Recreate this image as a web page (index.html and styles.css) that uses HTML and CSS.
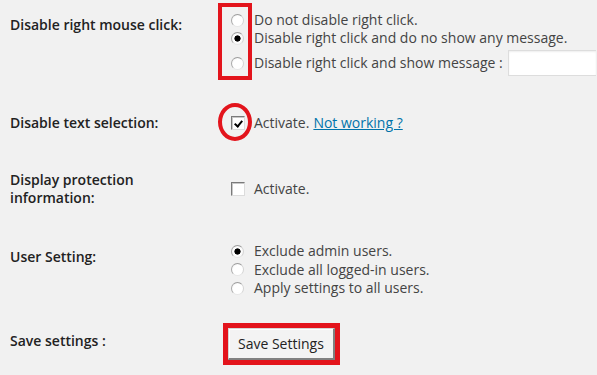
FILE: index.html
```html
<!DOCTYPE html>
<html lang="en">
<head>
    <meta charset="UTF-8">
    <meta name="viewport" content="width=device-width, initial-scale=1.0">
    <title>Copy Protection Settings</title>
    <link rel="stylesheet" href="styles.css">
</head>
<body>
    <form class="settings">
        <!-- right click -->
        <div class="row row-rclick">
            <div class="label">Disable right mouse click:</div>
            <div class="field">
                <div class="choices">
                    <span class="mark-box"></span>
                    <label class="choice"><input type="radio" name="rclick"> Do not disable right click.</label>
                    <label class="choice"><input type="radio" name="rclick" checked> Disable right click and do no show any message.</label>
                    <label class="choice choice-msg"><input type="radio" name="rclick"> Disable right click and show message : <input type="text" class="msg-input"></label>
                </div>
            </div>
        </div>

        <!-- text selection -->
        <div class="row row-select">
            <div class="label">Disable text selection:</div>
            <div class="field">
                <label class="choice choice-check">
                    <span class="mark-circle"></span>
                    <input type="checkbox" checked> Activate. <a href="#" class="help-link">Not working ?</a>
                </label>
            </div>
        </div>

        <!-- protection info -->
        <div class="row row-info">
            <div class="label">Display protection<br>information:</div>
            <div class="field">
                <label class="choice"><input type="checkbox"> Activate.</label>
            </div>
        </div>

        <!-- users -->
        <div class="row row-users">
            <div class="label">User Setting:</div>
            <div class="field">
                <label class="choice"><input type="radio" name="users" checked> Exclude admin users.</label>
                <label class="choice"><input type="radio" name="users"> Exclude all logged-in users.</label>
                <label class="choice"><input type="radio" name="users"> Apply settings to all users.</label>
            </div>
        </div>

        <!-- save -->
        <div class="row row-save">
            <div class="label">Save settings :</div>
            <div class="field">
                <div class="mark-frame">
                    <button type="button" class="btn">Save Settings</button>
                </div>
            </div>
        </div>
    </form>
</body>
</html>
```

FILE: styles.css
```css
* {
    margin: 0;
    padding: 0;
    box-sizing: border-box;
}

body {
    font-family: "Open Sans", "Liberation Sans", sans-serif;
    font-size: 14px;
    color: #444;
    background: #f1f1f1;
    overflow: hidden;
}

.settings {
    padding: 11px 0 0 10px;
}

.row {
    display: flex;
    align-items: flex-start;
}

.label {
    width: 221px;
    flex-shrink: 0;
    font-weight: 600;
    color: #222;
    line-height: 18px;
}

.field {
    display: flex;
    flex-direction: column;
}

.choice {
    display: flex;
    align-items: center;
    line-height: 18px;
    white-space: nowrap;
}

.choices {
    position: relative;
}

/* rows */
.row-rclick .label { padding-top: 5px; }
.choice-msg { margin-top: 3px; }

.row-select { margin-top: 38px; align-items: center; }
.row-info { margin-top: 39px; align-items: center; }

.row-users { margin-top: 35px; }
.row-users .label { padding-top: 6px; }
.row-users .choice { line-height: 18.5px; }

.row-save { margin-top: 25px; }
.row-save .label { padding-top: 9px; }

/* radio + checkbox, old windows look */
input[type="radio"] {
    appearance: none;
    width: 13px;
    height: 13px;
    margin-right: 10px;
    border-radius: 50%;
    border: 1px solid;
    border-color: #9c9c9c #d4d4d4 #e6e6e6 #a8a8a8;
    background: radial-gradient(circle at 60% 60%, #fff 0 55%, #ececec 100%);
    flex-shrink: 0;
}

input[type="radio"]:checked {
    background: radial-gradient(circle, #000 0 2.8px, #fff 3.4px, #f0f0f0 100%);
}

input[type="checkbox"] {
    appearance: none;
    position: relative;
    width: 14px;
    height: 14px;
    margin-right: 9px;
    border: 1px solid;
    border-color: #7a7a7a #dcdcdc #dcdcdc #7a7a7a;
    box-shadow: inset 1px 1px 0 #c8c8c8;
    background: #fff;
    flex-shrink: 0;
}

input[type="checkbox"]:checked::before {
    content: "";
    position: absolute;
    left: 4px;
    top: 2px;
    width: 3px;
    height: 6px;
    border: solid #000;
    border-width: 0 2px 2px 0;
    transform: rotate(40deg);
}

/* field runs off the right edge in the original */
.msg-input {
    margin-left: 5px;
    width: 88px;
    height: 26px;
    border: 1px solid #ddd;
    border-right: 0;
    background: #fff;
    box-shadow: inset 0 1px 2px rgba(0,0,0,0.07);
}

.help-link {
    margin-left: 4px;
    color: #0073aa;
}

.btn {
    font-family: inherit;
    font-size: 14px;
    color: #222;
    height: 32px;
    padding: 0 9px;
    background: #f3f3f3;
    border: 1px solid;
    border-color: #d6d6d6 #808080 #808080 #d6d6d6;
    border-width: 1px 2px 2px 1px;
    box-shadow: inset 1px 1px 0 #fff;
}

/* red highlight marks */
.mark-box {
    position: absolute;
    left: -13px;
    top: -8px;
    width: 34px;
    height: 77px;
    border: 4px solid #e3141c;
}

.choice-check {
    position: relative;
}

.mark-circle {
    position: absolute;
    left: -13px;
    top: -11px;
    width: 34px;
    height: 38px;
    border: 4px solid #e3141c;
    border-radius: 50%;
}

.mark-frame {
    border: 5px solid #e3141c;
    padding: 0;
    margin-left: -8px;
}
```
